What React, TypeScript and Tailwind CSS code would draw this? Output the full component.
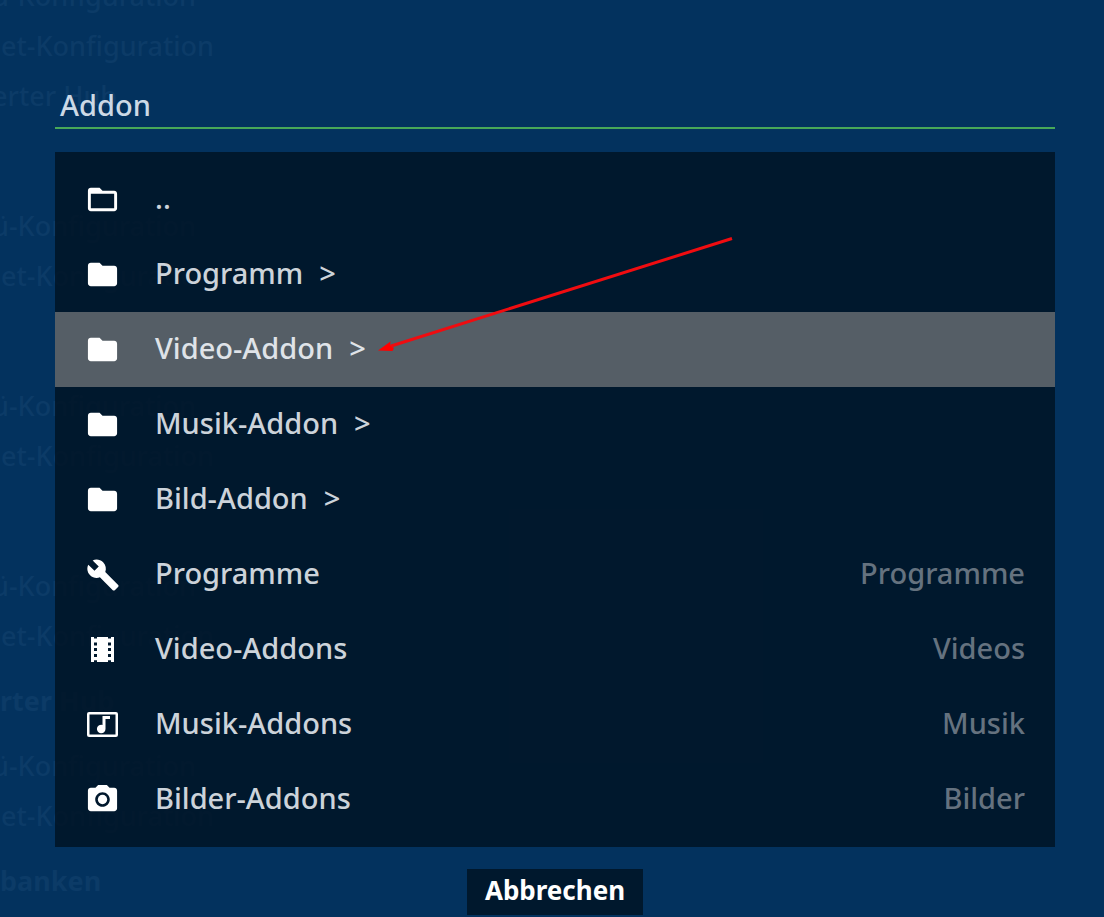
import type { ReactNode } from "react";
import { MdBuild, MdFolder, MdFolderOpen, MdPhotoCamera } from "react-icons/md";

function FilmIcon() {
  return (
    <svg viewBox="0 0 23 25" className="h-[25px] w-[23px]" fill="currentColor" aria-hidden="true">
      <path
        fillRule="evenodd"
        d="M0 0H3V1.5H6V0H17V1.5H20V0H23V25H20V23.2H17V25H6V23.2H3V25H0Z M3 5.5V8.5H6V5.5Z M3 11V14H6V11Z M3 17V20H6V17Z M17 5.5V8.5H20V5.5Z M17 11V14H20V11Z M17 17V20H20V17Z"
      />
    </svg>
  );
}

function MusicIcon() {
  return (
    <svg viewBox="0 0 31 25" className="h-[25px] w-[31px]" fill="currentColor" aria-hidden="true">
      <rect x="1.25" y="1.25" width="28.5" height="22.5" rx="0.8" fill="none" stroke="currentColor" strokeWidth="2.5" />
      <path d="M15.5 4H23V7H18.5V17A4.3 4.3 0 1 1 15.5 12.9Z" />
    </svg>
  );
}

type Item = { label: string; icon: ReactNode; submenu?: boolean; kind?: string; active?: boolean };

const folder = <MdFolder size={35} />;

const items: Item[] = [
  { label: "..", icon: <MdFolderOpen size={35} /> },
  { label: "Programm", icon: folder, submenu: true },
  { label: "Video-Addon", icon: folder, submenu: true, active: true },
  { label: "Musik-Addon", icon: folder, submenu: true },
  { label: "Bild-Addon", icon: folder, submenu: true },
  { label: "Programme", icon: <MdBuild size={34} />, kind: "Programme" },
  { label: "Video-Addons", icon: <FilmIcon />, kind: "Videos" },
  { label: "Musik-Addons", icon: <MusicIcon />, kind: "Musik" },
  { label: "Bilder-Addons", icon: <MdPhotoCamera size={35} />, kind: "Bilder" },
];

function Row({ item }: { item: Item }) {
  return (
    <li>
      <button
        type="button"
        className={
          item.active
            ? "flex h-[75px] w-full items-center bg-[#555e66] pr-[30px] text-left font-medium text-[#dfe3e8]"
            : "flex h-[75px] w-full items-center pr-[30px] text-left font-medium text-[#ccd3da]"
        }
      >
        <span className="flex w-[95px] justify-center text-white">
          {item.icon}
        </span>
        <span className="flex flex-1 gap-4 pb-1 pl-[5px]">
          <span>{item.label}</span>
          {item.submenu && <span>&gt;</span>}
        </span>
        {item.kind && <span className="pb-1 text-[#65727f]">{item.kind}</span>}
      </button>
    </li>
  );
}

function MenuPair() {
  return (
    <>
      <p className="-ml-2">ü-Konfiguration</p>
      <p className="ml-px">et-Konfiguration</p>
    </>
  );
}

function Backdrop() {
  return (
    <div
      aria-hidden="true"
      className="absolute inset-0 overflow-hidden text-[27px] leading-[50px] font-medium text-[#0c3b67]"
    >
      <div className="-mt-[29px]">
        <MenuPair />
        <p className="-ml-2">erter Hub</p>
      </div>
      <div className="mt-20">
        <MenuPair />
      </div>
      <div className="mt-20">
        <MenuPair />
      </div>
      <div className="mt-20">
        <MenuPair />
      </div>
      <p className="mt-[15px] font-bold">rter Hub</p>
      <div className="mt-[15px]">
        <MenuPair />
      </div>
      <p className="mt-[15px] font-bold">banken</p>
    </div>
  );
}

function Arrow() {
  return (
    <svg
      viewBox="0 0 360 120"
      className="pointer-events-none absolute top-[82px] left-[321px] h-[120px] w-[360px]"
      aria-hidden="true"
    >
      <path d="M12 113L356 4.5" stroke="#f00c10" strokeWidth="3" />
      <path d="M2 116.5L14.5 107.5L14 112L18 114L16.5 117Z" fill="#ff0000" />
    </svg>
  );
}

export default function App() {
  return (
    <div className="relative min-h-screen overflow-hidden bg-[#03325e] font-['Noto_Sans',sans-serif] text-[29px] leading-10">
      <Backdrop />
      <main className="relative flex flex-col pt-[85px] pr-[49px] pl-[55px]">
        <h1 className="h-11 border-b-2 border-[#48a858] pl-[5px] font-medium text-[#ccd9e6]">Addon</h1>
        <div className="relative mt-[23px] bg-[#001121]/80 py-[10px]">
          <ul>
            {items.map((item) => (
              <Row key={item.label} item={item} />
            ))}
          </ul>
          <Arrow />
        </div>
        <button
          type="button"
          className="mt-[22px] h-[46px] self-center bg-[#00182d] px-[18px] pb-1 text-[26px] font-bold text-white"
        >
          Abbrechen
        </button>
      </main>
    </div>
  );
}
